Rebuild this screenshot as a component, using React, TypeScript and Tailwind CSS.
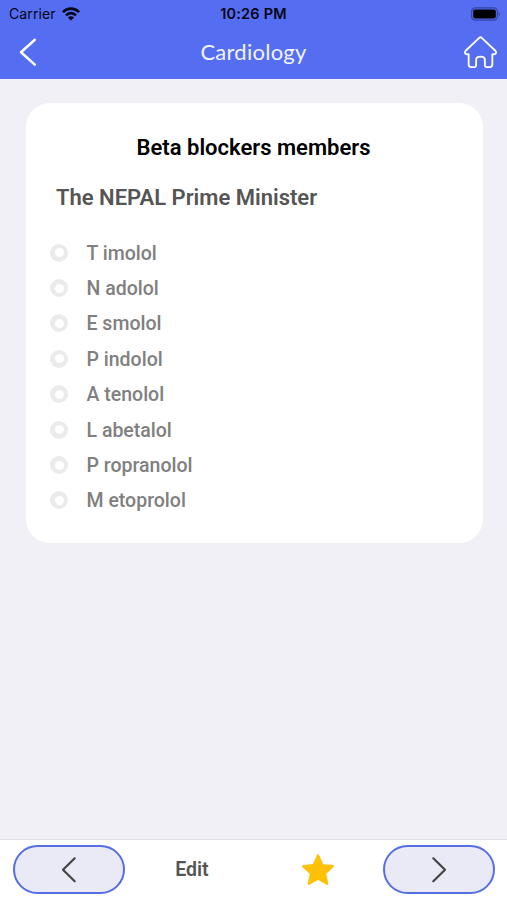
import React from "react"

const members = [
    "T imolol",
    "N adolol",
    "E smolol",
    "P indolol",
    "A tenolol",
    "L abetalol",
    "P ropranolol",
    "M etoprolol",
]

const Chevron = ({ className = "", d, width = 2 }: { className?: string; d: string; width?: number }) => (
    <svg className={className} viewBox="0 0 18 28" fill="none" stroke="currentColor" strokeWidth={width} strokeLinecap="round" strokeLinejoin="round">
        <path d={d} />
    </svg>
)

const Wifi = () => (
    <svg className="ml-[6px] h-[14px] w-[18px]" viewBox="0 0 18 14" fill="none" stroke="#030615" strokeWidth="2.6">
        <path d="M0.9 5.1C5.4 0.4 12.6 0.4 17.1 5.1" />
        <path d="M4 8.3C6.9 5.4 11.1 5.4 14 8.3" />
        <path d="M9 13.6L5.9 10.4C7.7 8.8 10.3 8.8 12.1 10.4Z" fill="#030615" stroke="none" />
    </svg>
)

const Battery = () => (
    <svg className="h-[14px] w-[30px]" viewBox="0 0 30 14">
        <rect x="0.6" y="0.9" width="25.8" height="12.2" rx="3.6" fill="none" stroke="#3144a4" strokeWidth="1.2" />
        <rect x="2.2" y="2.4" width="22.6" height="9.2" rx="2" fill="#000" />
        <path d="M27.7 5v4c1.6-.5 1.6-3.5 0-4z" fill="#3144a4" />
    </svg>
)

const Home = () => (
    <svg className="h-[33px] w-[33px]" viewBox="0 0 34 34" fill="none" stroke="#fff" strokeWidth="1.9" strokeLinejoin="round">
        <path d="M15.7 1.9L1.7 15.2Q.4 16.7 1.4 18.2Q2.2 19 4.8 18.8V29.2Q4.8 32.1 7.5 32.1H10.9Q12.5 32.1 12.5 30.5V24.6Q12.5 21.3 17 21.3Q21.5 21.3 21.5 24.6V30.5Q21.5 32.1 23.1 32.1H26.5Q29.2 32.1 29.2 29.2V18.8Q31.8 19 32.6 18.2Q33.6 16.7 32.3 15.2L18.3 1.9Q17 .8 15.7 1.9Z" />
    </svg>
)

const Star = () => (
    <svg className="h-8 w-8" viewBox="0 0 32 32" fill="#ffc107" stroke="#ffc107" strokeWidth="2.4" strokeLinejoin="round">
        <path d="M16 1.5L20.3 11.2L30.7 12.3L22.9 19.3L25.1 29.7L16 24.4L6.9 29.7L9.1 19.3L1.3 12.3L11.7 11.2Z" />
    </svg>
)

const Header = () => (
    <header className="h-[79px] bg-[#556df1]">
        <div className="grid h-[27px] grid-cols-3 items-center font-['Inter',sans-serif] text-[14px] text-[#030615]">
            <div className="flex items-center pl-[9px]">
                <span className="tracking-[0.1px]">Carrier</span>
                <Wifi />
            </div>
            <span className="text-center text-[14.5px] font-semibold tracking-[0.2px]">10:26 PM</span>
            <div className="flex justify-end pr-[6px]">
                <Battery />
            </div>
        </div>
        <div className="grid h-[50px] grid-cols-[1fr_auto_1fr] items-center pl-[19px] pr-[19px]">
            <button className="w-[34px] text-white">
                <Chevron className="h-[28px] w-[18px]" d="M15.8 1.8L2 14.2L15.8 26.6" width={2.5} />
            </button>
            <h1 className="font-['Lato',sans-serif] text-[22px] leading-7 tracking-[0.25px] text-[#f2f4ff]">Cardiology</h1>
            <button className="mr-[-9px] mt-[1px] justify-self-end">
                <Home />
            </button>
        </div>
    </header>
)

const Card = () => (
    <section className="ml-[25.5px] mt-6 h-[439.5px] w-[457px] rounded-[24px] bg-white pt-[29px]">
        <h2 className="pr-px text-center text-[22px] font-semibold leading-8 text-black">Beta blockers members</h2>
        <h3 className="mt-[18px] pl-[30.5px] text-[22px] font-semibold leading-8 text-[#555]">The NEPAL Prime Minister</h3>
        <ul className="mt-[21px] pl-[24.5px]">
            {members.map((member) => (
                <li key={member} className="flex h-[35.4px] items-center">
                    <span className="h-[18px] w-[18px] rounded-full bg-[#ebebeb] p-[4.5px]">
                        <span className="block h-full rounded-full bg-white"></span>
                    </span>
                    <span className="ml-[18.5px] pt-px text-[19.5px] font-medium text-[#808080]">{member}</span>
                </li>
            ))}
        </ul>
    </section>
)

const Footer = () => (
    <footer className="flex h-[61px] items-center justify-between border-t border-[#dfdfe3] bg-white px-[13px] pb-[1px]">
        <button className="flex h-[49px] w-[112px] items-center justify-center rounded-full border-[2.5px] border-[#566ee5] bg-[#e9eaf6] text-[#444]">
            <Chevron className="h-[28px] w-[18px]" d="M14.7 2.3L3 13.8L14.7 25.3" width={2.2} />
        </button>
        <button className="ml-[-1px] mr-px pt-px text-[19.5px] font-semibold text-[#555]">Edit</button>
        <button className="ml-[41px] mr-[-2px]">
            <Star />
        </button>
        <button className="mr-[-1px] flex h-[49px] w-[112px] items-center justify-center rounded-full border-[2.5px] border-[#566ee5] bg-[#e9eaf6] text-[#444]">
            <Chevron className="h-[28px] w-[18px]" d="M3.3 2.3L15 13.8L3.3 25.3" width={2.2} />
        </button>
    </footer>
)

const App = () => {
    return (
        <div className="flex h-[900px] w-[507px] flex-col overflow-hidden bg-[#f0f0f6] font-['Roboto',sans-serif]">
            <Header />
            <main className="flex-1">
                <Card />
            </main>
            <Footer />
        </div>
    )
}

export default App
